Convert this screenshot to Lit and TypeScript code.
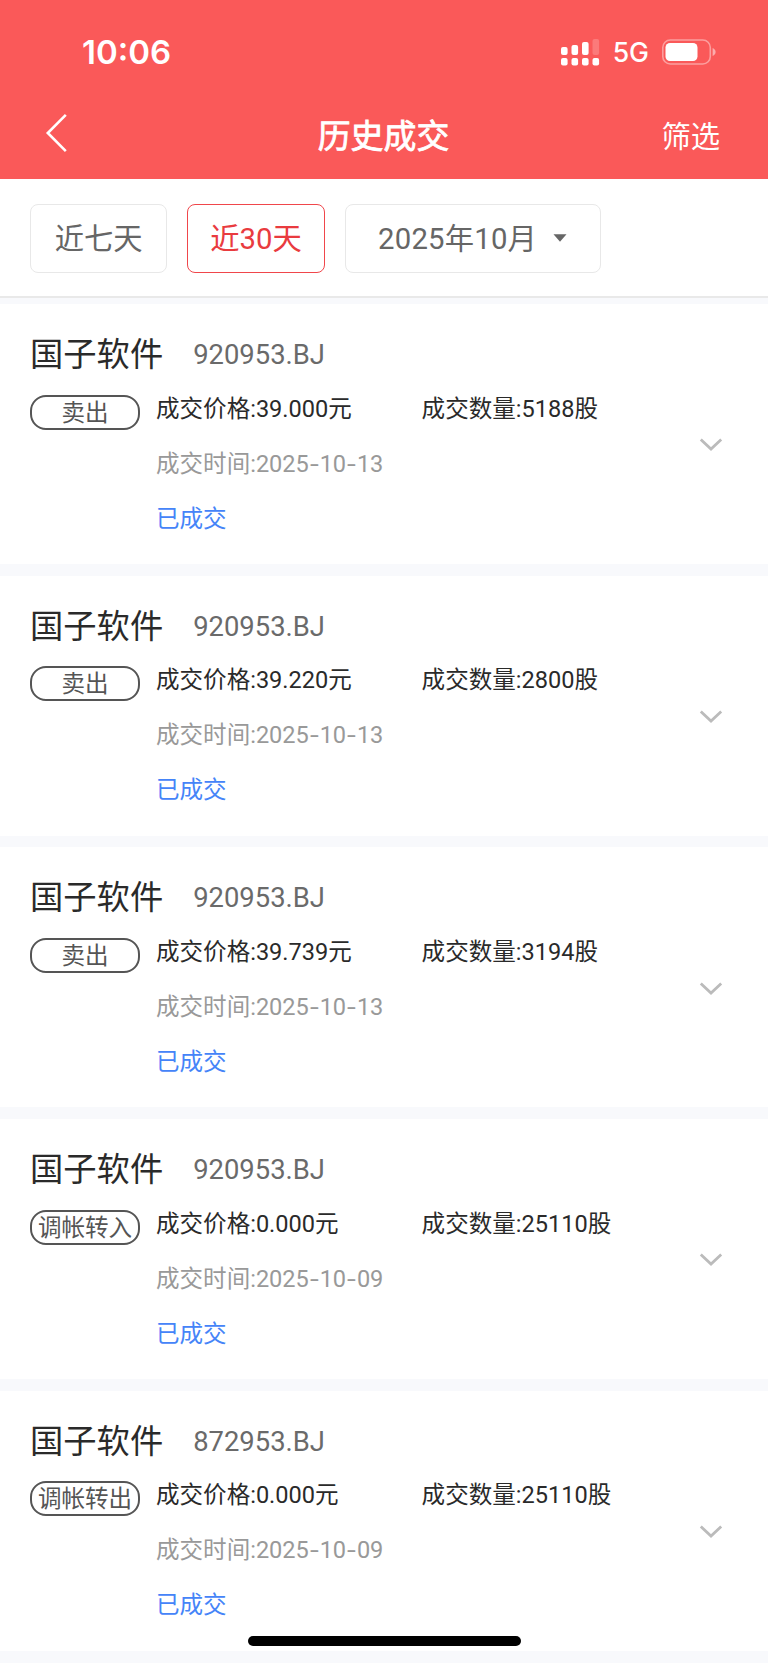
import { LitElement, html, css } from "lit";
import { customElement, property } from "lit/decorators.js";

interface Trade {
  name: string;
  code: string;
  kind: string;
  price: string;
  amount: string;
  date: string;
}

const trades: Trade[] = [
  { name: "国子软件", code: "920953.BJ", kind: "卖出", price: "39.000", amount: "5188", date: "2025-10-13" },
  { name: "国子软件", code: "920953.BJ", kind: "卖出", price: "39.220", amount: "2800", date: "2025-10-13" },
  { name: "国子软件", code: "920953.BJ", kind: "卖出", price: "39.739", amount: "3194", date: "2025-10-13" },
  { name: "国子软件", code: "920953.BJ", kind: "调帐转入", price: "0.000", amount: "25110", date: "2025-10-09" },
  { name: "国子软件", code: "872953.BJ", kind: "调帐转出", price: "0.000", amount: "25110", date: "2025-10-09" },
];

@customElement("trade-card")
class TradeCard extends LitElement {
  @property({ attribute: false }) trade!: Trade;

  static styles = css`
    :host {
      display: block;
      box-sizing: border-box;
      height: 260px;
      padding: 31px 45px 0 30px;
      background: #fff;
      white-space: nowrap;
    }
    .head {
      display: flex;
      align-items: center;
      gap: 30px;
      height: 40px;
    }
    .name {
      font-size: 33.3px;
      line-height: 40px;
      color: #2a2a2a;
    }
    .code {
      font-size: 27.4px;
      line-height: 40px;
      color: #6a6a6a;
    }
    .body {
      display: grid;
      grid-template-columns: 110px 249.6px 1fr 24px;
      column-gap: 16px;
      margin-top: 16.8px;
      font-size: 23.55px;
      line-height: 34px;
      color: #2a2a2a;
    }
    .badge {
      box-sizing: border-box;
      height: 35px;
      margin-top: 3px;
      border: 2px solid #555;
      border-radius: 16px;
      text-align: center;
      line-height: 32px;
      color: #555;
    }
    .lines {
      display: flex;
      flex-direction: column;
      gap: 20.9px;
    }
    .time {
      color: #999;
    }
    .dash {
      display: inline-block;
      width: 10.8px;
      text-align: center;
      transform: scaleX(1.35);
    }
    .done {
      color: #4584f8;
    }
    .chevron {
      margin-top: 45.6px;
      width: 24px;
      height: 16px;
    }
  `;

  render() {
    const t = this.trade;
    const date = t.date.split("-");
    return html`
      <div class="head"><span class="name">${t.name}</span><span class="code">${t.code}</span></div>
      <div class="body">
        <div class="badge">${t.kind}</div>
        <div class="lines">
          <div>成交价格:${t.price}元</div>
          <div class="time">成交时间:${date[0]}<span class="dash">-</span>${date[1]}<span class="dash">-</span>${date[2]}</div>
          <div class="done">已成交</div>
        </div>
        <div>成交数量:${t.amount}股</div>
        <svg class="chevron" viewBox="0 0 24 16" fill="none" stroke="#bbb" stroke-width="2.8">
          <path d="M1.8 2.5 L12 12 L22.2 2.5" />
        </svg>
      </div>
    `;
  }
}

@customElement("app-root")
class AppRoot extends LitElement {
  static styles = css`
    :host {
      display: block;
      position: relative;
      height: 1663px;
      overflow: hidden;
      background: #f8f9fc;
      font-family: Roboto, "Noto Sans CJK SC", sans-serif;
    }
    .top {
      height: 179.4px;
      background: #fa5959;
      color: #fff;
    }
    .status {
      display: flex;
      align-items: center;
      box-sizing: border-box;
      height: 103px;
      padding: 0 51px 0 82px;
      font-family: Inter, sans-serif;
    }
    .clock {
      flex: 1;
      font-size: 33px;
      font-weight: 600;
    }
    .signal {
      width: 39px;
      height: 28px;
    }
    .net {
      margin: 1px 12px 0 12.5px;
      font-size: 26.6px;
      font-weight: 500;
    }
    .battery {
      width: 56px;
      height: 26px;
    }
    .nav {
      display: grid;
      grid-template-columns: 1fr auto 1fr;
      align-items: center;
      height: 62px;
      padding: 0 48px 0 46px;
    }
    .back {
      width: 24px;
      height: 40px;
      margin: -3px 0 0 -1px;
    }
    .title {
      font-size: 32.9px;
      line-height: 46px;
      margin: 6px 0 0 1px;
      font-weight: 400;
      -webkit-text-stroke: 0.8px #fff;
    }
    .filter {
      justify-self: end;
      font-size: 29.3px;
    }
    .tabs {
      display: flex;
      gap: 19.9px;
      box-sizing: border-box;
      height: 118.6px;
      padding: 24.6px 30px 0;
      background: #fff;
      border-bottom: 2px solid #e9e9e9;
      margin-bottom: 6px;
      font-size: 29.3px;
      color: #666;
    }
    .tab {
      display: flex;
      align-items: center;
      justify-content: center;
      box-sizing: border-box;
      width: 137.4px;
      height: 69px;
      padding-bottom: 4px;
      border: 1px solid #e8e8e8;
      border-radius: 8px;
      white-space: nowrap;
    }
    .active {
      border-color: #f0464b;
      color: #e93b3f;
    }
    .month {
      width: 256px;
      gap: 16px;
      letter-spacing: 0.2px;
    }
    .caret {
      width: 14px;
      height: 8px;
      margin-top: 4px;
    }
    .list {
      display: flex;
      flex-direction: column;
      gap: 11.67px;
    }
    .home {
      position: absolute;
      left: 247.5px;
      bottom: 17px;
      width: 273px;
      height: 10px;
      border-radius: 5px;
      background: #000;
    }
  `;

  render() {
    return html`
      <header class="top">
        <div class="status">
          <span class="clock">10:06</span>
          <svg class="signal" viewBox="0 0 39 28" fill="#fff">
            <rect x="0" y="9" width="6.6" height="8" rx="2" />
            <rect x="10.5" y="7" width="6.6" height="10" rx="2" />
            <rect x="21" y="4" width="6.6" height="13" rx="2" />
            <rect x="31.5" y="1" width="6.6" height="16" rx="2" opacity=".2" />
            <rect x="0" y="20" width="6.6" height="7.5" rx="2" />
            <rect x="10.5" y="20" width="6.6" height="7.5" rx="2" />
            <rect x="21" y="20" width="6.6" height="7.5" rx="2" />
            <rect x="31.5" y="20" width="6.6" height="7.5" rx="2" />
          </svg>
          <span class="net">5G</span>
          <svg class="battery" viewBox="0 0 56 26" fill="#fff">
            <rect x="1.8" y="1" width="47.5" height="24" rx="7.5" fill="none" stroke="#fff" stroke-width="1.6" opacity=".42" />
            <rect x="4.5" y="4" width="32" height="18" rx="4.5" />
            <path d="M51.6 9 C55.6 10.4 55.6 15.6 51.6 17Z" opacity=".5" />
          </svg>
        </div>
        <nav class="nav">
          <svg class="back" viewBox="0 0 24 40" fill="none" stroke="#fff" stroke-width="2.6">
            <path d="M20.8 1.8 L2.8 20 L20.8 38.2" />
          </svg>
          <span class="title">历史成交</span>
          <span class="filter">筛选</span>
        </nav>
      </header>
      <div class="tabs">
        <div class="tab">近七天</div>
        <div class="tab active">近30天</div>
        <div class="tab month">
          <span>2025年10月</span>
          <svg class="caret" viewBox="0 0 14 8" fill="#666"><path d="M.5 .3H13.5L7 7.7Z" /></svg>
        </div>
      </div>
      <main class="list">${trades.map((t) => html`<trade-card .trade=${t}></trade-card>`)}</main>
      <div class="home"></div>
    `;
  }
}
